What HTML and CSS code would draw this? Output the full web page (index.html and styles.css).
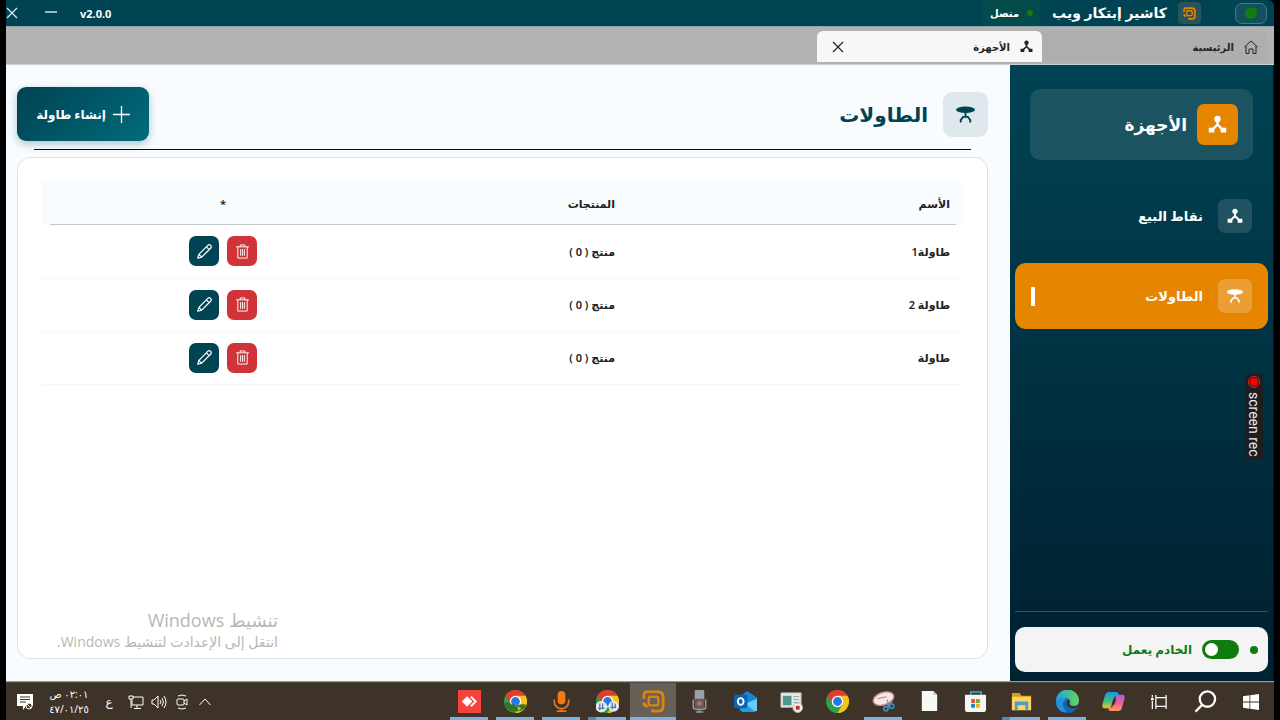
FILE: index.html
```html
<!DOCTYPE html>
<html lang="ar" dir="rtl">
<head>
<meta charset="utf-8">
<meta name="viewport" content="width=device-width, initial-scale=1">
<title>كاشير إبتكار ويب</title>
<link rel="stylesheet" href="styles.css">
</head>
<body>
<svg class="defs" aria-hidden="true">
  <symbol id="hub" viewBox="0 0 24 24"><circle cx="12" cy="5" r="4"/><path d="M12 7v6M12 12l-7 7M12 12l7 7" fill="none" stroke="currentColor" stroke-width="3"/><path d="M1 16h7v6H1zM16 16h7v6h-7z"/></symbol>
  <symbol id="table" viewBox="0 0 24 24"><ellipse cx="12" cy="6" rx="12" ry="4"/><path d="M12 8v7M6 22v-3l3-4h6l3 4v3" fill="none" stroke="currentColor" stroke-width="2.4"/></symbol>
  <symbol id="trash" viewBox="0 0 16 16"><path d="M1 3h14M5.500 3V1h5v2M3 3v12h10V3M6 5.500v7M8 5.500v7M10 5.500v7" fill="none" stroke="currentColor"/></symbol>
  <symbol id="pencil" viewBox="0 0 16 16"><path d="M.8 15.200L2 11 11.500 1.500a2 2 0 0 1 3 3L5 14zM2 11l3 3M10 3l3 3" fill="none" stroke="currentColor" stroke-width="1.300" stroke-linejoin="round"/></symbol>
  <symbol id="close" viewBox="0 0 12 12"><path d="M1 1l10 10M11 1L1 11" fill="none" stroke="currentColor" stroke-width="1.200"/></symbol>
  <symbol id="brand" viewBox="0 0 24 24"><path d="M2 9V5q0-3 3-3h12q5 0 5 5v10q0 5-5 5h-6v-2M6 17q-4 0-4-4" fill="none" stroke="currentColor" stroke-width="3"/><path d="M8 7h7q2 0 2 2v5q0 2-2 2H9q-2 0-2-2V8z" fill="none" stroke="currentColor" stroke-width="2.500"/></symbol>
  <symbol id="chrome" viewBox="0 0 24 24"><circle cx="12" cy="12" r="12" fill="#2ba24c"/><path d="M1.600 6A12 12 0 0 1 22.400 6H12v6L7 15z" fill="#e33b2e"/><path d="M22.400 6A12 12 0 0 1 12 24l5.200-9L12 6z" fill="#fbc116"/><circle cx="12" cy="12" r="6" fill="#fff"/><circle cx="12" cy="12" r="4.600" fill="#2878e4"/></symbol>
</svg>

<header class="titlebar">
  <button class="power" aria-label="الحالة"><span></span></button>
  <span class="logo"><svg><use href="#brand"/></svg></span>
  <h1>كاشير إبتكار ويب</h1>
  <span class="status"><i></i>متصل</span>
  <span class="version" dir="ltr">v2.0.0</span>
  <button class="win" aria-label="تصغير"><svg viewBox="0 0 12 12"><path d="M0 5h12" stroke="currentColor" stroke-width="1.400"/></svg></button>
  <button class="win" aria-label="إغلاق"><svg><use href="#close"/></svg></button>
</header>

<nav class="tabs">
  <a class="tab home" href="#home"><svg viewBox="0 0 14 14" fill="none" stroke="currentColor" stroke-width="1"><path d="M.5 7L7 1l6.500 6M2 6v7.500h3V9h4v4.500h3V6"/></svg>الرئيسية</a>
  <div class="tab active"><svg><use href="#hub"/></svg><span>الأجهزة</span><button aria-label="إغلاق التبويب"><svg><use href="#close"/></svg></button></div>
</nav>

<div class="workspace">
  <aside class="sidebar">
    <div class="side-head"><span class="side-logo"><svg><use href="#hub"/></svg></span><h2>الأجهزة</h2></div>
    <nav class="menu">
      <a href="#pos"><span class="chip"><svg><use href="#hub"/></svg></span>نقاط البيع</a>
      <a href="#tables" class="current" aria-current="page"><span class="chip"><svg><use href="#table"/></svg></span>الطاولات</a>
    </nav>
    <div class="side-foot">
      <label class="server"><i></i><input type="checkbox" role="switch" checked><span>الخادم يعمل</span></label>
    </div>
    <div class="recorder" dir="ltr"><i></i>screen rec</div>
  </aside>

  <main class="content">
    <div class="page-head">
      <span class="page-icon"><svg><use href="#table"/></svg></span>
      <h2>الطاولات</h2>
      <button class="create"><svg viewBox="0 0 18 18"><path d="M9 0v18M0 9h18" stroke="currentColor" stroke-width="1.400"/></svg>إنشاء طاولة</button>
    </div>
    <section class="card">
      <table>
        <thead><tr><th class="c-name">الأسم</th><th class="c-items">المنتجات</th><th class="c-act">*</th></tr></thead>
        <tbody>
          <tr><td>طاولة1</td><td>منتج ( 0 )</td><td class="c-act"><div><button class="del" aria-label="حذف"><svg><use href="#trash"/></svg></button><button class="edit" aria-label="تعديل"><svg><use href="#pencil"/></svg></button></div></td></tr>
          <tr><td>طاولة 2</td><td>منتج ( 0 )</td><td class="c-act"><div><button class="del" aria-label="حذف"><svg><use href="#trash"/></svg></button><button class="edit" aria-label="تعديل"><svg><use href="#pencil"/></svg></button></div></td></tr>
          <tr><td>طاولة</td><td>منتج ( 0 )</td><td class="c-act"><div><button class="del" aria-label="حذف"><svg><use href="#trash"/></svg></button><button class="edit" aria-label="تعديل"><svg><use href="#pencil"/></svg></button></div></td></tr>
        </tbody>
      </table>
    </section>
    <div class="watermark"><p class="wm-title">تنشيط Windows</p><p>انتقل إلى الإعدادت لتنشيط Windows.</p></div>
  </main>
</div>

<footer class="taskbar">
  <button class="task" aria-label="ابدأ"><svg class="small" viewBox="0 0 16 16"><path fill="#fff" d="M0 2.200L6.500 1.300v6.300H0zM7.300 1.200L16 0v7.600H7.300zM0 8.400h6.500v6.300L0 13.800zM7.300 8.400H16V16l-8.700-1.200z"/></svg></button>
  <button class="task" aria-label="بحث"><svg viewBox="0 0 24 24" fill="none" stroke="#fff" stroke-width="2.400"><circle cx="14" cy="9.500" r="8"/><path d="M8.500 15.500L1.500 22.500"/></svg></button>
  <button class="task" aria-label="عرض المهام"><svg class="small" viewBox="0 0 18 18" fill="none" stroke="#fff" stroke-width="1.400"><path d="M5.500 1v3H17V1M5.500 17v-3H17v3M5.500 4v10M17 4v10M1.500 1v3M1.500 8v9"/><path d="M0 5.800h3" stroke-width="2.500"/></svg></button>
  <button class="task" aria-label="Copilot"><svg viewBox="0 0 24 24"><defs><linearGradient id="cpa" x2="0" y2="1"><stop stop-color="#1695ec"/><stop offset=".6" stop-color="#46c27a"/><stop offset="1" stop-color="#f4c628"/></linearGradient><linearGradient id="cpb" x2="0" y2="1"><stop stop-color="#a160f0"/><stop offset=".5" stop-color="#f05a94"/><stop offset="1" stop-color="#ff9c5b"/></linearGradient></defs><path fill="url(#cpa)" d="M7 2h8q2 0 3 4h-3q-2 0-3 3l-2 7q-1 3-4 3H3q-4 0-2-6l2-7q1-4 4-4z"/><path fill="url(#cpb)" d="M17 22H9q-2 0-3-4h3q2 0 3-3l2-7q1-3 4-3h3q4 0 2 6l-2 7q-1 4-4 4z"/><path fill="#3d3328" d="M12 9h3l-2 6h-3z"/></svg></button>
  <button class="task open" aria-label="Edge"><svg viewBox="0 0 24 24"><defs><linearGradient id="eg"><stop stop-color="#1fa3dc"/><stop offset="1" stop-color="#65d657"/></linearGradient></defs><circle cx="12" cy="12" r="12" fill="#1267b8"/><path fill="url(#eg)" d="M0 12a12 12 0 0 1 24-1c0 4-3 6-6 6s-5-1-4-3c2-5-3-7-7-5-4 1-7 1-7 3z"/><path fill="#3d3328" d="M14.500 12c0 2-1 3 1 4s6 1 7.500-1l-1 3c-4 3-11 0-11-4q0-3 2-4 1 0 1.500 2z"/><path fill="#2290da" d="M0 12c2-5 8-5 11-2-5 1-5 8 0 13C4 24 0 18 0 12z"/></svg></button>
  <button class="task open more" aria-label="مستكشف الملفات"><svg viewBox="0 0 24 24"><path fill="#d79a20" d="M2 3h8l2 3h10v15H2z"/><path fill="#ffd35d" d="M2 7h20v14H2z"/><path fill="#4b9fce" d="M5 12h14v9h-3v-5H8v5H5z"/></svg></button>
  <button class="task" aria-label="المتجر"><svg viewBox="0 0 24 24"><path d="M7 6V2h11v4" fill="none" stroke="#37acd4" stroke-width="1.600"/><path d="M1 5h22v15q0 3-3 3H4q-3 0-3-3z" fill="#f5f5f3"/><path fill="#e94e25" d="M7.500 9.500h4v4h-4z"/><path fill="#71aa28" d="M12.500 9.500h4v4h-4z"/><path fill="#1685cf" d="M7.500 14.500h4v4h-4z"/><path fill="#eeb01d" d="M12.500 14.500h4v4h-4z"/></svg></button>
  <button class="task" aria-label="مستند"><svg viewBox="0 0 24 24"><path d="M4 1h12l4 4v17H4z" fill="#f8f8f5"/><path d="M16 1v4h4" fill="#bdbdb8"/></svg></button>
  <button class="task open" aria-label="أداة القطع"><svg viewBox="0 0 24 24"><ellipse cx="12" cy="9" rx="11" ry="6.500" transform="rotate(-18 12 9)" fill="#f4e7e5" stroke="#c98b8c" stroke-width="1.500"/><path d="M6 9l9-2" stroke="#c7696d" fill="none"/><path d="M16 10l1 7M21 12l-5 6" stroke="#6f9fc0" stroke-width="1.500"/><circle cx="14.500" cy="19.500" r="2.200" fill="none" stroke="#3a8cc0" stroke-width="1.800"/><circle cx="20.500" cy="17" r="2.300" fill="none" stroke="#3a8cc0" stroke-width="1.800"/></svg></button>
  <button class="task" aria-label="Chrome"><svg><use href="#chrome"/></svg></button>
  <button class="task" aria-label="مسجل الخطوات"><svg viewBox="0 0 24 24"><path fill="#e9ebea" stroke="#b8bbb7" d="M1 3h21v15H1z"/><path fill="#4d988e" d="M3 6h9v10H3z"/><path d="M14 7h6M14 10h6M14 13h6" stroke="#92a1a4"/><circle cx="18.500" cy="18.500" r="5" fill="#efefed" stroke="#b8b8b4"/><path fill="#cf2730" d="M16.500 16.500h4v4h-4z"/></svg></button>
  <button class="task" aria-label="Outlook"><svg viewBox="0 0 24 24"><path fill="#1687d7" d="M5 7l9-6 10 7v14H6z"/><path fill="#69cdf3" d="M8 16l16-7v13H8z"/><path fill="#229fe2" d="M8 12l15 11H8z"/><rect y="5" width="14" height="14" rx="2" fill="#0765b7"/><ellipse cx="7" cy="12" rx="3" ry="3.500" fill="none" stroke="#fff" stroke-width="2"/></svg></button>
  <button class="task" aria-label="ميكروفون"><svg viewBox="0 0 24 24"><rect x="7" y="0" width="10" height="11" rx="1" fill="#9aa0aa"/><rect x="7" y="9" width="10" height="10" rx="1" fill="#5c5e62"/><path d="M5.500 10v8q0 2 3 2h7q3 0 3-2v-8M12 20v3M8 23h8" fill="none" stroke="#979ca3" stroke-width="1.500"/><circle cx="12" cy="14" r="2.500" fill="#d1694b"/></svg></button>
  <button class="task open selected" aria-label="كاشير إبتكار"><svg class="gold" viewBox="0 0 24 24"><use href="#brand"/></svg></button>
  <button class="task open more" aria-label="Chrome"><svg viewBox="0 0 24 24"><use href="#chrome"/><circle cx="5.500" cy="17.500" r="6" fill="#e5eaf2"/><circle cx="18.500" cy="17" r="5.500" fill="#e5eaf2"/><path d="M2 19h7M4 14v7M7 14v6M15 18h6M17 13v7M20 14v5" stroke="#49678f" stroke-width="1.200"/></svg></button>
  <button class="task open" aria-label="مسجل الصوت"><svg viewBox="0 0 24 24"><rect x="8" y="1" width="8" height="14" rx="4" fill="#f57914"/><path d="M4.500 10v2a7.500 7.500 0 0 0 15 0v-2M12 19v3M7 22h10" fill="none" stroke="#ed7218" stroke-width="1.800"/></svg></button>
  <button class="task open" aria-label="Chrome"><svg viewBox="0 0 24 24"><use href="#chrome"/><path d="M0 14q5-3 8 1 3-1 4 2 4-3 11-2l-1 4q-5 4-10 3-7 2-12-8z" fill="#397326"/><path d="M14 17l4 2-3 3z" fill="#d4bc30"/></svg></button>
  <button class="task open" aria-label="AnyDesk"><svg viewBox="0 0 24 24"><path fill="#f4433d" d="M0 0h24v24H0z"/><path fill="#fff" d="M9.500 6.500l5.500 5.500-5.500 5.500L4 12z"/><path d="M13.500 7L18.500 12l-5 5" fill="none" stroke="#fff" stroke-width="2"/></svg></button>
  <div class="tray">
    <button aria-label="الأيقونات المخفية"><svg viewBox="0 0 16 16"><path d="M2.500 11L8 5l5.500 6"/></svg></button>
    <button aria-label="الكاميرا"><svg viewBox="0 0 16 16"><rect x="3" y="5" width="7" height="6" rx="1"/><path d="M10 7l3-2v6l-3-2M4 2q4-2 8 0M4 14q4 2 8 0"/></svg></button>
    <button aria-label="الصوت"><svg viewBox="0 0 16 16"><path d="M1 6h2l4-4v12l-4-4H1zM9 6q2 2 0 4M11 4q3 4 0 8M13 2q4 6 0 12"/></svg></button>
    <button aria-label="الشبكة"><svg viewBox="0 0 16 16"><path d="M5 3h10v8H4V6M9 11v3M6 14.500h7M1 2h4v3H1zM3 5v9"/></svg></button>
    <span class="lang">ع</span>
    <time>٠٢:٠١ ص<br>٤٧/٠١/٢٥</time>
    <button class="note" aria-label="الإشعارات"><svg viewBox="0 0 16 16"><path d="M0 0h16v12H9l-3 4v-4H0z" fill="#fff" stroke="none"/><path d="M3 3h10M3 5.500h10M3 8h6" stroke="#3d3328"/><circle cx="12" cy="12" r="3" fill="#3d3328"/><path d="M10 10l4 4"/></svg></button>
  </div>
</footer>
</body>
</html>
```
FILE: styles.css
```css
* { box-sizing: border-box; }
body {
  margin: 0;
  padding: 0 6px;
  min-height: 100vh;
  display: flex;
  flex-direction: column;
  background: #000;
  font-family: "Noto Sans", "DejaVu Sans", sans-serif;
  font-size: 11px;
  color: #222;
  fill: currentColor;
}
h1, h2, p { margin: 0; }
button { border: 0; padding: 0; background: none; color: inherit; font: inherit; display: flex; align-items: center; justify-content: center; }
a { color: inherit; text-decoration: none; }
svg { display: block; flex: none; }
.defs { position: absolute; width: 0; height: 0; }

.titlebar { height: 26px; background: #004353; color: #fff; fill: #fff; display: flex; align-items: center; padding-right: 7px; border-radius: 0 6px 0 0; }
.power { width: 32px; height: 21px; border: 1px solid #47798a; border-radius: 7px; background: #14505c; }
.power span { width: 12px; height: 12px; border-radius: 50%; background: #107c10; }
.logo { display: grid; place-items: center; width: 23px; height: 22px; margin-right: 34px; border-radius: 4px; background: #29535a; color: #e68600; }
.logo svg { width: 13px; height: 13px; }
.titlebar h1 { font-size: 14px; line-height: 24px; margin-right: 11px; white-space: nowrap; }
.status { display: flex; align-items: center; gap: 8px; height: 26px; padding: 0 8px; margin-right: 11px; background: #034a4c; font-size: 10px; font-weight: bold; }
.status i { width: 6px; height: 6px; border-radius: 50%; background: #107c10; }
.version { margin-right: auto; font-size: 11px; font-weight: bold; }
.win { width: 12px; height: 20px; margin-right: 23px; color: #d5f1f5; }
.win + .win { margin-right: 27px; }
.win svg { width: 12px; height: 12px; }

.tabs { height: 39px; padding: 4px 7px 2px 0; display: flex; background: #b2b2b2; border-top: 1px solid #8aa5ac; border-bottom: 1px solid #c8d3d5; }
.tab { width: 225px; display: flex; align-items: center; padding: 0 9px; gap: 10px; border-radius: 6px 6px 0 0; font-size: 10px; font-weight: 600; }
.tab svg { width: 13px; height: 13px; }
.home { background: #aeaeae; }
.home svg { width: 14px; height: 14px; }
.active { background: #f7f7f7; }
.active button { margin-right: auto; width: 24px; height: 24px; }
.active button svg { width: 12px; height: 12px; }

.workspace { flex: 1; display: flex; min-height: 0; background: #f8fcff; border-bottom: 1px solid #9a9a97; }
.sidebar { position: relative; width: 264px; flex: none; display: flex; flex-direction: column; padding: 24px 5px 9px; background: linear-gradient(#004353, #002333 90%); color: #fff; fill: #fff; border-right: 1px solid #00141c; }
.side-head { height: 71px; margin: 0 15px; padding: 0 15px; display: flex; align-items: center; gap: 10px; border-radius: 10px; background: #1b5361; }
.side-head h2 { font-size: 17px; }
.side-logo { display: grid; place-items: center; width: 41px; height: 41px; border-radius: 7px; background: #e68600; }
.side-logo svg { width: 19px; height: 19px; }
.menu { display: flex; flex-direction: column; gap: 14px; margin-top: 23px; }
.menu a { height: 66px; display: flex; align-items: center; gap: 15px; padding: 0 16px; border-radius: 11px; font-size: 13px; font-weight: bold; }
.menu .current { background: #e68600; }
.menu .current::after { content: ""; width: 4px; height: 19px; border-radius: 1px; background: #fff; margin-right: auto; }
.chip { display: grid; place-items: center; width: 34px; height: 34px; border-radius: 7px; background: rgba(255, 255, 255, .12); }
.current .chip { background: rgba(255, 255, 255, .2); }
.chip svg { width: 16px; height: 16px; }
.side-foot { margin-top: auto; padding-top: 15px; border-top: 1px solid #315462; }
.server { display: flex; align-items: center; height: 45px; padding: 0 10px; border-radius: 10px; background: #f4f4f4; color: #107c10; font-size: 12px; font-weight: 600; }
.server i { width: 8px; height: 8px; border-radius: 50%; background: #107c10; }
.server input { appearance: none; width: 37px; height: 19px; margin: 0 11px 0 10px; padding: 3px; border-radius: 10px; background: #107c10; display: flex; justify-content: flex-end; }
.server input::before { content: ""; width: 13px; height: 13px; border-radius: 50%; background: #fff; }
.recorder { position: absolute; top: 309px; right: 10px; display: flex; align-items: center; gap: 5px; width: 18px; padding: 3px 0; writing-mode: vertical-rl; border-radius: 3px; background: #1e1e22; color: #ececec; font: 14px/18px Roboto, sans-serif; white-space: nowrap; }
.recorder i { width: 10px; height: 10px; border-radius: 50%; border: 1px solid #1e1e22; outline: 1px solid #e32222; background: #f00; }

.content { position: relative; flex: 1; min-width: 0; display: flex; flex-direction: column; padding: 22px 22px 22px 11px; }
.page-head { display: flex; align-items: center; padding-bottom: 9px; margin-bottom: 7px; background: linear-gradient(#00151c, #00151c) 50% 100% / calc(100% - 34px) 1px no-repeat; }
.page-icon { display: grid; place-items: center; width: 45px; height: 45px; border-radius: 9px; background: #dfe8ec; color: #004353; fill: #004353; }
.page-icon svg { width: 19px; height: 19px; }
.page-head h2 { margin-right: 15px; font-size: 20px; font-weight: 600; color: #004353; }
.create { margin-right: auto; width: 132px; height: 54px; gap: 7px; border-radius: 9px; background: linear-gradient(135deg, #004353, #006b7a); color: #fff; font-size: 12px; font-weight: bold; white-space: nowrap; box-shadow: 0 3px 8px rgba(0, 67, 83, .3); }
.create svg { width: 17px; height: 17px; }
.card { flex: 1; padding: 24px 23px 24px 24px; border: 1px solid #dde1e4; border-radius: 13px; background: #fff; }
table { width: 100%; table-layout: fixed; border-collapse: collapse; }
thead tr { background: linear-gradient(#c4cacc, #c4cacc) 50% 100% / calc(100% - 16px) 1px no-repeat #f8fcff; }
th { height: 43px; padding: 0 14px; text-align: right; font-weight: 600; }
td { height: 53px; padding: 0 14px; font-weight: 600; border-bottom: 1px solid #f6f7f8; }
.c-name { width: 335px; }
.c-items { width: 225px; }
.c-act { text-align: center; }
.c-act div { display: flex; justify-content: center; gap: 8px; }
.c-act button { width: 30px; height: 30px; border-radius: 7px; color: #fff; }
.c-act svg { width: 15px; height: 15px; }
.del { background: #d13438; }
.edit { background: #004353; }
.watermark { position: absolute; left: 51px; bottom: 29px; color: #b7b7b7; font: 14px/20px "Open Sans", "DejaVu Sans", sans-serif; white-space: nowrap; }
.wm-title { font-size: 18px; line-height: 24px; }

.taskbar { height: 38px; display: flex; background: #3d3328; color: #fff; border-top: 1px solid #4e463c; }
.task { width: 46px; position: relative; }
.task svg { width: 23px; height: 23px; }
.task .small { width: 16px; height: 16px; }
.task .gold { color: #dc850d; }
.open::after { content: ""; position: absolute; bottom: 0; left: 4px; right: 4px; height: 3px; background: #7eb0dd; }
.more::after { background: linear-gradient(90deg, #5689b5 8px, #7eb0dd 8px); }
.selected { background: #666056; }
.selected::after { left: 0; right: 0; }
.tray { margin-right: auto; display: flex; align-items: center; padding-left: 10px; }
.tray button { width: 23px; height: 30px; }
.tray svg { width: 16px; height: 16px; fill: none; stroke: #fff; }
.lang { width: 30px; text-align: center; font-size: 12px; }
.tray time { width: 50px; font-size: 10px; line-height: 15px; text-align: center; white-space: nowrap; }
.tray .note { width: 18px; margin-right: 10px; }
```
